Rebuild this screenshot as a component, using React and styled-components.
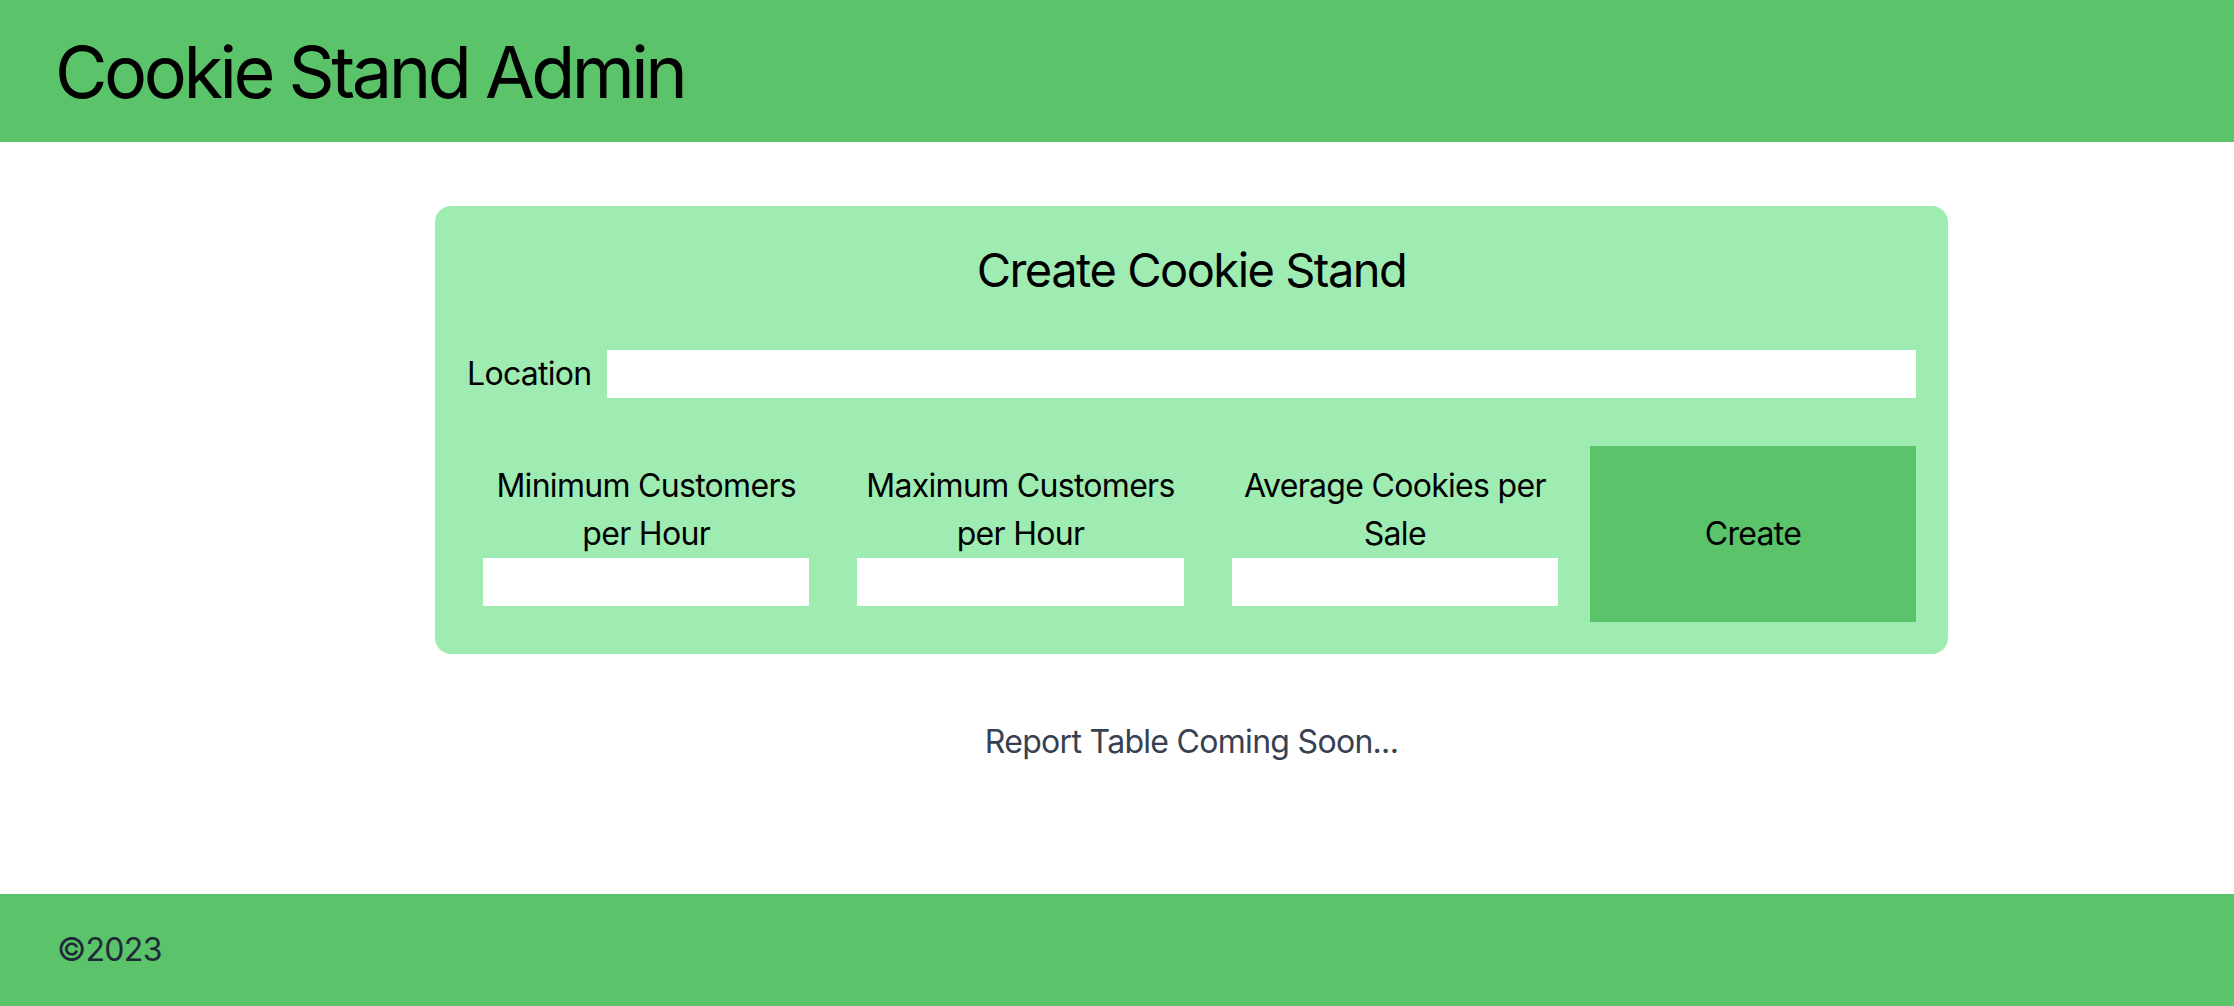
import React from "react";
import styled, { createGlobalStyle } from "styled-components";

const GlobalStyle = createGlobalStyle`
  * { box-sizing: border-box; }
  body {
    margin: 0;
    font-family: Inter, "Noto Sans", sans-serif;
    background: #ffffff;
    color: #000000;
    letter-spacing: -0.7px;
  }
`;

const Page = styled.div`
  display: flex;
  flex-direction: column;
  min-height: 100vh;
`;

const Header = styled.header`
  background: #5bc36a;
  padding: 32px 55px 30px;
  h1 {
    margin: 0;
    font-size: 72px;
    line-height: 80px;
    font-weight: 400;
    letter-spacing: -3.5px;
  }
`;

const Main = styled.main`
  display: flex;
  flex-direction: column;
  margin: 64px 286px 0 435px;
  flex: 1;
`;

const Card = styled.form`
  background: #9fecb3;
  border-radius: 16px;
  padding: 32px;
  display: flex;
  flex-direction: column;
`;

const CardTitle = styled.h2`
  margin: 0 0 48px;
  text-align: center;
  font-size: 47px;
  line-height: 64px;
  font-weight: 400;
  letter-spacing: -1.5px;
`;

const LocationRow = styled.div`
  display: flex;
  align-items: center;
  gap: 15px;
  margin-bottom: 48px;
  label {
    font-size: 32px;
    line-height: 48px;
  }
`;

const TextInput = styled.input`
  border: none;
  outline: none;
  background: #ffffff;
  height: 48px;
  width: 100%;
  flex: ${(p) => (p.$grow ? "1" : "0 0 48px")};
  font-size: 32px;
  padding: 0 8px;
`;

const FieldRow = styled.div`
  display: flex;
  align-items: center;
  gap: 48px;
  padding-left: 16px;
`;

const Field = styled.div`
  flex: 1;
  display: flex;
  flex-direction: column;
  label {
    text-align: center;
    font-size: 32px;
    line-height: 48px;
  }
`;

const CreateButton = styled.button`
  flex: 0 0 326px;
  height: 176px;
  margin-left: -16px;
  border: none;
  background: #5bc36a;
  color: #000000;
  font-family: inherit;
  letter-spacing: inherit;
  font-size: 32px;
  line-height: 48px;
  cursor: pointer;
`;

const Coming = styled.p`
  margin: 64px 0 0;
  text-align: center;
  font-size: 32px;
  line-height: 48px;
  color: #374151;
`;

const Footer = styled.footer`
  background: #5bc36a;
  padding: 32px 57px;
  height: 112px;
  font-size: 32px;
  line-height: 48px;
  color: #1f2937;
`;

const fields = [
  "Minimum Customers per Hour",
  "Maximum Customers per Hour",
  "Average Cookies per Sale",
];

export default function App() {
  return (
    <Page>
      <GlobalStyle />
      <Header>
        <h1>Cookie Stand Admin</h1>
      </Header>
      <Main>
        <Card onSubmit={(e) => e.preventDefault()}>
          <CardTitle>Create Cookie Stand</CardTitle>
          <LocationRow>
            <label htmlFor="location">Location</label>
            <TextInput id="location" $grow />
          </LocationRow>
          <FieldRow>
            {fields.map((f) => (
              <Field key={f}>
                <label>{f}</label>
                <TextInput />
              </Field>
            ))}
            <CreateButton type="submit">Create</CreateButton>
          </FieldRow>
        </Card>
        <Coming>Report Table Coming Soon...</Coming>
      </Main>
      <Footer>©2023</Footer>
    </Page>
  );
}
